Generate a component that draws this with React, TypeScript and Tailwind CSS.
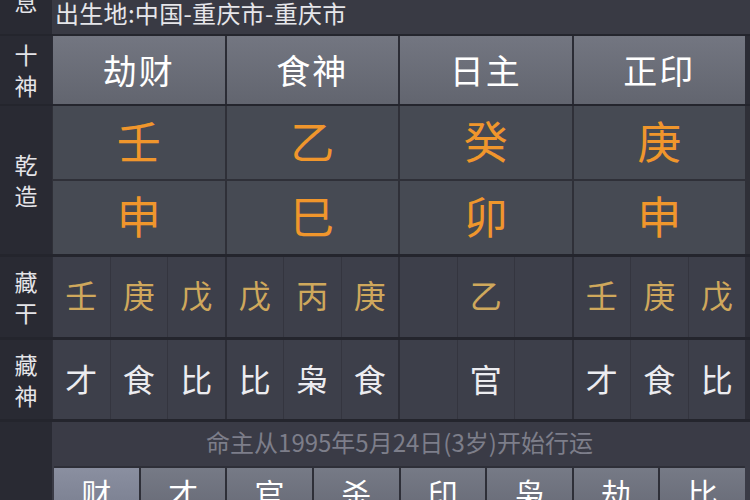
import React from "react";

const FONT = { fontFamily: '"Noto Sans CJK SC", "Noto Sans", sans-serif' };

const TEN_GODS = ["劫财", "食神", "日主", "正印"];
const STEMS = ["壬", "乙", "癸", "庚"];
const BRANCHES = ["申", "巳", "卯", "申"];
const HIDDEN_STEMS = [
  ["壬", "庚", "戊"],
  ["戊", "丙", "庚"],
  ["", "乙", ""],
  ["壬", "庚", "戊"],
];
const HIDDEN_GODS = [
  ["才", "食", "比"],
  ["比", "枭", "食"],
  ["", "官", ""],
  ["才", "食", "比"],
];
const TABS = ["财", "才", "官", "杀", "印", "枭", "劫", "比"];

function Label({ text }: { text: string }) {
  return (
    <div className="w-[52px] shrink-0 bg-[#292a33] flex flex-col items-center justify-center text-[23px] leading-[31px] text-[#e4e4e8]">
      {text.split("").map((c, i) => (
        <span key={i}>{c}</span>
      ))}
    </div>
  );
}

export default function App() {
  return (
    <div
      className="w-[750px] h-[500px] overflow-hidden bg-[#24252d] flex flex-col"
      style={FONT}
    >
      {/* birth place */}
      <div className="h-[34px] flex shrink-0 bg-[#393a44]">
        <div className="w-[52px] shrink-0 bg-[#292a33] flex justify-center overflow-hidden">
          <span className="text-[23px] leading-[29px] text-[#e4e4e8] -mt-[13px]">息</span>
        </div>
        <div className="pl-[3px] pt-[1px] text-[24px] leading-[24px] text-[#e6e6ea] tracking-[0.3px]">
          出生地:中国-重庆市-重庆市
        </div>
      </div>

      {/* ten gods header */}
      <div className="h-[68px] mt-[2px] flex shrink-0">
        <Label text="十神" />
        <div className="flex-1 grid grid-cols-4 gap-[2px] pl-[1px] pr-[5px] bg-[#2b2c35]">
          {TEN_GODS.map((t) => (
            <div
              key={t}
              className="flex items-center justify-center pb-[2px] bg-gradient-to-b from-[#737681] to-[#62656f] text-[34px] tracking-[2px] text-white"
            >
              {t}
            </div>
          ))}
        </div>
      </div>

      {/* stems / branches */}
      <div className="h-[148px] mt-[2px] flex shrink-0">
        <Label text="乾造" />
        <div className="flex-1 grid grid-cols-4 grid-rows-2 gap-[2px] pl-[1px] pr-[5px] bg-[#2f3038]">
          {[...STEMS, ...BRANCHES].map((c, i) => (
            <div
              key={i}
              className="flex items-center justify-center pb-[6px] bg-[#464a53] text-[44px] leading-none text-[#f0962c]"
            >
              {c}
            </div>
          ))}
        </div>
      </div>

      {/* hidden stems */}
      <div className="h-[80px] mt-[3px] flex shrink-0">
        <Label text="藏干" />
        <div className="flex-1 grid grid-cols-4 gap-[2px] pl-[1px] pr-[5px] bg-[#2c2d36]">
          {HIDDEN_STEMS.map((group, gi) => (
            <div key={gi} className="grid grid-cols-3 gap-[1px] bg-[#34353f]">
              {group.map((c, i) => (
                <div
                  key={i}
                  className="flex items-center justify-center pb-[6px] bg-[#3d3f4a] text-[32px] leading-none text-[#cfa85c]"
                >
                  {c}
                </div>
              ))}
            </div>
          ))}
        </div>
      </div>

      {/* hidden gods */}
      <div className="h-[79px] mt-[3px] flex shrink-0">
        <Label text="藏神" />
        <div className="flex-1 grid grid-cols-4 gap-[2px] pl-[1px] pr-[5px] bg-[#2c2d36]">
          {HIDDEN_GODS.map((group, gi) => (
            <div key={gi} className="grid grid-cols-3 gap-[1px] bg-[#34353f]">
              {group.map((c, i) => (
                <div
                  key={i}
                  className="flex items-center justify-center pb-[4px] bg-[#3d3f4a] text-[32px] leading-none text-[#ececf0]"
                >
                  {c}
                </div>
              ))}
            </div>
          ))}
        </div>
      </div>

      {/* luck start + tabs */}
      <div className="flex-1 mt-[3px] flex">
        <div className="w-[52px] shrink-0 bg-[#292a33]" />
        <div className="flex-1 flex flex-col bg-[#3a3b46] pl-[2px] pr-[5px]">
          <div className="h-[44px] shrink-0 flex items-center justify-center pb-[4px] text-[24px] text-[#7d7e8a]">
            命主从1995年5月24日(3岁)开始行运
          </div>
          <div className="flex-1 grid grid-cols-8 gap-[2px] bg-[#2e2f38] pt-[2px]">
            {TABS.map((t, i) => (
              <div
                key={t}
                className={
                  i === 0
                    ? "flex justify-center pt-[4px] bg-gradient-to-b from-[#8a8fa0] to-[#7a7f90] text-[30px] leading-[40px] text-white"
                    : "flex justify-center pt-[4px] bg-gradient-to-b from-[#767a86] to-[#686b77] text-[30px] leading-[40px] text-white"
                }
              >
                {t}
              </div>
            ))}
          </div>
        </div>
      </div>
    </div>
  );
}
